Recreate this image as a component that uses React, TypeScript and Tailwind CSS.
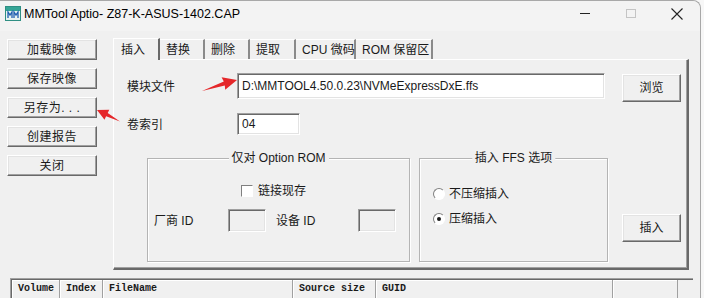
import React from "react";

const ui = "font-['Liberation_Sans','Noto_Sans_CJK_SC',sans-serif] text-[12px] text-[#1a1a1a]";
const btn =
  "flex items-center justify-center bg-[#f0f0f0] border border-t-white border-l-white border-r-[#696969] border-b-[#696969] shadow-[inset_-1px_-1px_0_#a0a0a0,inset_1px_1px_0_#e3e3e3]";
const edit =
  "flex items-center border border-t-[#a0a0a0] border-l-[#a0a0a0] border-r-white border-b-white shadow-[inset_1px_1px_0_#696969,inset_-1px_-1px_0_#e3e3e3]";

const sideButtons = ["加载映像", "保存映像", "另存为. . .", "创建报告", "关闭"];
const tabs = [
  { label: "插入", w: 47 },
  { label: "替换", w: 45 },
  { label: "删除", w: 45 },
  { label: "提取", w: 46 },
  { label: "CPU 微码", w: 60 },
  { label: "ROM 保留区", w: 77 },
];
const cols = [
  { label: "Volume", w: 48 },
  { label: "Index", w: 43 },
  { label: "FileName", w: 190 },
  { label: "Source size", w: 83 },
  { label: "GUID", w: 237 },
  { label: "", w: 65 },
];

function AppIcon() {
  return (
    <svg width="16" height="15" viewBox="0 0 16 15">
      <rect x="0.5" y="0.5" width="15" height="14" fill="#e8f4f1" stroke="#2f8f83" />
      <rect x="1" y="1" width="14" height="4" fill="#36a596" />
      <path d="M3 12V6l2 3 2-3v6M9 12V6l2 3 2-3v6" fill="none" stroke="#1f5fb0" strokeWidth="1.3" />
    </svg>
  );
}

function Radio({ checked }: { checked?: boolean }) {
  return (
    <span className="w-[12px] h-[12px] rounded-full bg-white border border-t-[#808080] border-l-[#808080] border-r-white border-b-white flex items-center justify-center">
      {checked && <span className="w-[4px] h-[4px] rounded-full bg-[#1a1a1a]" />}
    </span>
  );
}

function Group({ title, className, children }: { title: string; className: string; children: React.ReactNode }) {
  return (
    <div className={`relative border border-[#b4b4b4] shadow-[1px_1px_0_white,inset_1px_1px_0_white] ${className}`}>
      <span className="absolute -top-[9px] left-1/2 -translate-x-1/2 bg-[#f0f0f0] px-[3px] whitespace-nowrap leading-[16px]">
        {title}
      </span>
      {children}
    </div>
  );
}

export default function App() {
  return (
    <div className={`w-[704px] h-[298px] overflow-hidden bg-[#f7f7f7] relative ${ui}`}>
      <div className="w-[701px] h-[298px] bg-[#f0f0f0] border-t border-r border-[#a8a8a8] rounded-tr-[8px] flex flex-col">
        {/* title bar */}
        <div className="h-[30px] shrink-0 bg-[#f3f3f3] flex items-start rounded-tr-[8px]">
          <div className="ml-[5px] mt-[5px]">
            <AppIcon />
          </div>
          <span className="ml-[3px] mt-[4px] text-[12.5px] leading-[18px] text-black">MMTool Aptio- Z87-K-ASUS-1402.CAP</span>
          <div className="ml-auto flex items-start h-full">
            <div className="w-[46px] h-full flex justify-center pt-[12px]">
              <span className="w-[10px] h-px bg-[#222]" />
            </div>
            <div className="w-[46px] h-full flex justify-center pt-[8px]">
              <span className="w-[10px] h-[9px] border border-[#c4c4c4]" />
            </div>
            <div className="w-[46px] h-full flex justify-center pt-[7px]">
              <svg width="12" height="12" viewBox="0 0 12 12">
                <path d="M0.5 0.5l11 11M11.5 0.5l-11 11" stroke="#222" strokeWidth="1.1" />
              </svg>
            </div>
          </div>
        </div>

        {/* body */}
        <div className="flex">
          <div className="w-[113px] shrink-0 pl-[7px] pt-[8px] flex flex-col gap-[8px]">
            {sideButtons.map((b) => (
              <div key={b} className={`${btn} w-[90px] h-[21px] tracking-[0.5px] whitespace-pre`}>
                {b}
              </div>
            ))}
          </div>

          <div className="w-[576px] pt-[6px]">
            {/* tabs */}
            <div className="flex items-end h-[22px]">
              {tabs.map((t, i) => (
                <div
                  key={t.label}
                  style={{ width: t.w }}
                  className={
                    i === 0
                      ? "h-[22px] relative z-10 -mb-px pl-[7px] pt-[2px] bg-[#f0f0f0] border-t border-l border-t-white border-l-white border-r-2 border-r-[#696969]"
                      : "h-[20px] pl-[6px] pt-[1px] border-t border-t-white border-r-2 border-r-[#8a8a8a] whitespace-nowrap"
                  }
                >
                  {t.label}
                </div>
              ))}
            </div>

            {/* panel */}
            <div className="h-[211px] border-t border-l border-t-white border-l-white border-r-2 border-b-2 border-r-[#696969] border-b-[#696969] shadow-[inset_-1px_-1px_0_#a0a0a0] pl-[13px] pt-[13px]">
              <div className="flex items-start">
                <span className="w-[110px] pt-[5px]">模块文件</span>
                <div className={`${edit} w-[368px] h-[26px] bg-white pl-[4px]`}>D:\MMTOOL4.50.0.23\NVMeExpressDxE.ffs</div>
                <div className={`${btn} ml-[17px] mt-px w-[59px] h-[28px]`}>浏览</div>
              </div>

              <div className="flex items-start mt-[11px]">
                <span className="w-[110px] pt-[3px]">卷索引</span>
                <div className={`${edit} w-[63px] h-[22px] bg-white pl-[4px]`}>04</div>
              </div>

              <div className="flex items-start mt-[23px]">
                <Group title="仅对 Option ROM" className="ml-[20px] w-[263px] h-[104px]">
                  <div className="flex items-center mt-[23px] ml-[93px]">
                    <span className="w-[12px] h-[12px] bg-white border border-t-[#808080] border-l-[#808080] border-r-white border-b-white" />
                    <span className="ml-[5px]">链接现存</span>
                  </div>
                  <div className="flex items-center mt-[9px] ml-[6px]">
                    <span className="w-[74px]">厂商 ID</span>
                    <div className={`${edit} w-[38px] h-[23px]`} />
                    <span className="ml-[10px] w-[82px]">设备 ID</span>
                    <div className={`${edit} w-[38px] h-[23px]`} />
                  </div>
                </Group>

                <Group title="插入 FFS 选项" className="ml-[9px] w-[189px] h-[104px]">
                  <div className="flex flex-col ml-[13px] mt-[27px] gap-[9px]">
                    <div className="flex items-center gap-[4px] h-[16px]">
                      <Radio />
                      <span>不压缩插入</span>
                    </div>
                    <div className="flex items-center gap-[4px] h-[16px]">
                      <Radio checked />
                      <span>压缩插入</span>
                    </div>
                  </div>
                </Group>

                <div className={`${btn} ml-[14px] mt-[56px] w-[59px] h-[28px]`}>插入</div>
              </div>
            </div>
          </div>
        </div>

        {/* list */}
        <div className="mt-[8px] ml-[10px] w-[683px] border-t border-l border-t-[#a0a0a0] border-l-[#a0a0a0] shadow-[inset_1px_1px_0_#696969] pt-[1px] pl-[1px] flex">
          {cols.map((c) => (
            <div
              key={c.label || "blank"}
              style={{ width: c.w }}
              className="h-[19px] shrink-0 border-r border-b border-r-[#a0a0a0] border-b-[#a0a0a0] shadow-[inset_1px_1px_0_white] pl-[6px] pt-[2px] font-['Liberation_Mono',monospace] text-[10px] font-bold leading-[14px] whitespace-nowrap"
            >
              {c.label}
            </div>
          ))}
        </div>
      </div>

      {/* red annotation arrows */}
      <svg className="absolute inset-0 pointer-events-none" width="704" height="298">
        <polygon
          points="202,91 224.8,85.6 225.2,89.8 237,80 221.6,77.2 223.8,81.6"
          fill="#e5272a"
        />
        <polygon
          points="120,121.5 106.1,116.3 104.5,119.7 97,110 109.3,109.7 107.7,113.1"
          fill="#e5272a"
        />
      </svg>
    </div>
  );
}
